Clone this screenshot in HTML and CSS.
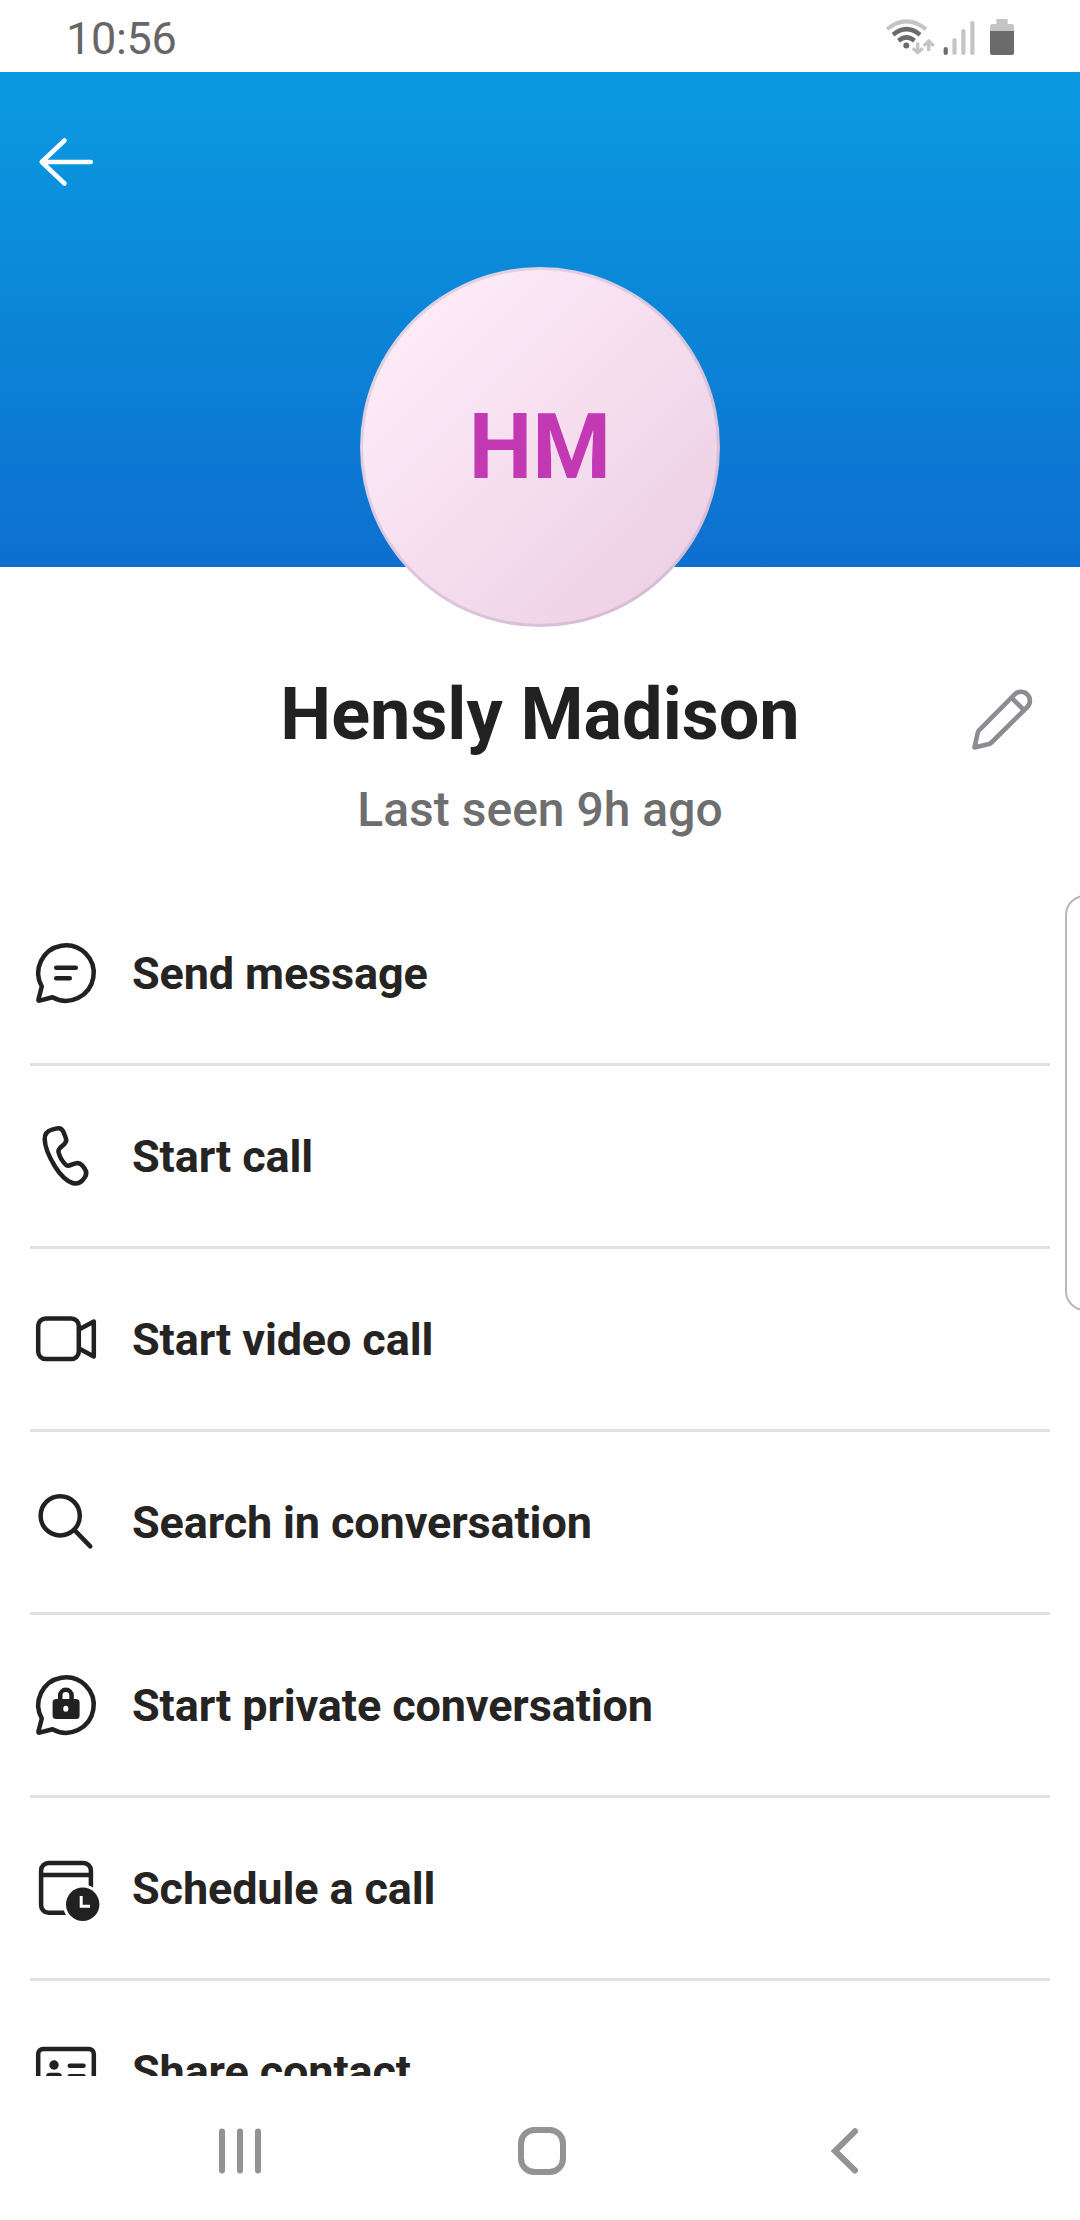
FILE: index.html
```html
<!DOCTYPE html>
<html lang="en">
<head>
<meta charset="utf-8">
<title>Hensly Madison</title>
<link rel="stylesheet" href="styles.css">
</head>
<body>
<div class="screen">
  <div class="status-bar">
    <span class="clock">10:56</span>
    <svg class="status-icons" viewBox="880 12 140 48">
      <g fill="none" stroke="#c4c4c4" stroke-width="4">
        <path d="M887 29.300Q906.500 13.500 926 29.300"/>
        <path d="M893 34.800Q906.500 23.500 920 34.800" stroke="#6b6b6b" stroke-width="4.400"/>
        <path d="M898.500 40.800Q906.500 34 914.500 40.800" stroke="#6b6b6b" stroke-width="4.400"/>
        <path d="M917.700 42.500V52M912.700 48.200L917.700 52.600L922.700 48.200" stroke-width="3.200"/>
        <path d="M928.700 51V41.500M923.700 45.800L928.700 41L933.700 45.800" stroke-width="3.200"/>
      </g>
      <circle cx="906.300" cy="45.500" r="3" fill="#6b6b6b"/>
      <g stroke-width="4.200" stroke-linecap="round" stroke="#c4c4c4">
        <path d="M945.700 49.200V53" stroke="#6b6b6b"/>
        <path d="M954.500 40.200V53M963.400 31.200V53M972.400 23.200V53"/>
      </g>
      <path d="M990 31V26.500Q990 24 992.500 24H996.300V19H1007.700V24H1011.500Q1014 24 1014 26.500V31Z" fill="#c4c4c4"/>
      <path d="M990 31H1014V53Q1014 55 1012 55H992Q990 55 990 53Z" fill="#6b6b6b"/>
    </svg>
  </div>

  <div class="hero">
    <svg class="back" viewBox="0 0 72 72" fill="none" stroke="#fff" stroke-width="4.500" stroke-linecap="round" stroke-linejoin="round">
      <path d="M34.500 14.500L11.700 36L34.500 57.500M11.700 36H60.800"/>
    </svg>
    <div class="avatar">HM</div>
  </div>

  <div class="profile">
    <h1 class="name">Hensly Madison</h1>
    <p class="seen">Last seen 9h ago</p>
    <svg class="edit" viewBox="966 684 72 72" fill="none" stroke="#8b8d93" stroke-width="4.600" stroke-linejoin="round">
      <path d="M1014.700 694.400A8.900 8.900 0 0 1 1027.300 707L991.500 742.500Q990.500 743.500 989 744L974.500 747.500L977.700 733Q978 731.500 979 730.300ZM1011.500 697.700L1024 710.200"/>
    </svg>
  </div>

  <ul class="actions">
    <li class="action">
      <svg class="icon" viewBox="0 0 72 72">
        <path d="M11.800 49.500A27.700 27.700 0 1 1 22.500 60.200L9.500 63.600Q8 63.800 8.400 62.500Z"/>
        <path d="M26.200 30.700H45.800M26.200 41.300H39.800"/>
      </svg>
      <span>Send message</span>
    </li>
    <li class="action">
      <svg class="icon" viewBox="0 0 72 72">
        <path d="M22 9.600L27 8.400Q31.500 7.500 33.300 11.700L35.800 18Q37 21.300 34.500 23.800L30 28Q28 30 28.600 32.500Q30.500 39.500 35.500 44.500Q37 46.200 39.200 45.500L45.500 43.400Q49.500 42.400 52 45.200L55 49.200Q57.500 53 55 57L52.500 60.300Q48.500 65 42.500 63Q33.500 60 25 46.500Q15 30 14.700 19.500Q14.500 11.500 22 9.600Z"/>
      </svg>
      <span>Start call</span>
    </li>
    <li class="action">
      <svg class="icon" viewBox="0 0 72 72">
        <rect x="8.200" y="15.500" width="40.600" height="40.600" rx="7.500"/>
        <path d="M49 26.500L63.800 18.600V53.400L49 45.500"/>
      </svg>
      <span>Start video call</span>
    </li>
    <li class="action">
      <svg class="icon" viewBox="0 0 72 72">
        <circle cx="30.200" cy="29.800" r="19.600"/>
        <path d="M44.500 44.200L60.300 60.300"/>
      </svg>
      <span>Search in conversation</span>
    </li>
    <li class="action">
      <svg class="icon" viewBox="0 0 72 72">
        <path d="M11.800 49.500A27.700 27.700 0 1 1 22.500 60.200L9.500 63.600Q8 63.800 8.400 62.500Z"/>
        <path d="M30.200 31V26.500A5.700 5.700 0 0 1 41.600 26.500V31"/>
        <rect class="solid" x="22.600" y="30" width="27" height="20" rx="3.500"/>
        <rect class="knockout" x="33.300" y="36.700" width="5" height="6" rx="2.500"/>
      </svg>
      <span>Start private conversation</span>
    </li>
    <li class="action">
      <svg class="icon" viewBox="0 0 72 72">
        <rect x="11.100" y="10.900" width="49.800" height="49.900" rx="7.500"/>
        <path d="M11.100 23H60.900"/>
        <circle class="knockout" cx="52.700" cy="52.300" r="19.800"/>
        <circle class="solid" cx="52.700" cy="52.300" r="16.700"/>
        <path class="hands" d="M51.200 44V54.300H60"/>
      </svg>
      <span>Schedule a call</span>
    </li>
    <li class="action">
      <svg class="icon" viewBox="0 0 72 72">
        <rect x="8.200" y="14" width="55.600" height="44" rx="5"/>
        <circle class="solid" cx="24" cy="30" r="4.700"/>
        <path class="solid" d="M16 42Q16 37.700 20 37.700H28Q32 37.700 32 42Q32 47 24 47Q16 47 16 42Z"/>
        <path d="M39.800 30.700H53.500M39.800 41.300H53.500"/>
      </svg>
      <span>Share contact</span>
    </li>
  </ul>

  <div class="nav-bar">
    <svg viewBox="0 0 60 60"><path d="M12 10.500V49.500M30 10.500V49.500M48 10.500V49.500"/></svg>
    <svg viewBox="0 0 60 60"><rect x="9" y="9" width="42" height="42" rx="13.500"/></svg>
    <svg viewBox="0 0 60 60"><path d="M41 10.300L21 30L41 49.500"/></svg>
  </div>
  <div class="edge-panel"></div>
</div>
</body>
</html>
```
FILE: styles.css
```css
* {
  box-sizing: border-box;
}

body {
  margin: 0;
  background: #fefefe;
  font-family: Roboto, "Liberation Sans", sans-serif;
  color: #212121;
}

.screen {
  position: relative;
  display: flex;
  flex-direction: column;
  width: 1080px;
  height: 2220px;
  overflow: hidden;
}

.status-bar {
  display: flex;
  flex: none;
  justify-content: space-between;
  align-items: center;
  height: 72px;
  padding: 0 60px 0 66px;
}

.clock {
  padding-top: 5px;
  font-size: 45px;
  line-height: 60px;
  letter-spacing: -0.3px;
  color: #666;
}

.status-icons {
  width: 140px;
  height: 48px;
}

.hero {
  display: flex;
  flex: none;
  flex-direction: column;
  height: 495px;
  padding: 54px 30px 0;
  background: linear-gradient(#0a9be1, #0d6fcf);
}

.back {
  flex: none;
  width: 72px;
  height: 72px;
}

.avatar {
  display: flex;
  flex: none;
  align-self: center;
  align-items: center;
  justify-content: center;
  width: 360px;
  height: 360px;
  margin-top: 69px;
  border: 3px solid rgba(120, 110, 150, 0.2);
  border-radius: 50%;
  background: linear-gradient(135deg, #fdeef6 8%, #f9e5f5 32%, #f5ddee 52%, #edcfe5 92%) border-box;
  color: #c239b3;
  font-size: 90px;
  font-weight: 700;
}

.profile {
  position: relative;
  flex: none;
  height: 316px;
  padding-top: 106px;
  text-align: center;
}

.name {
  margin: 0;
  font-size: 72px;
  font-weight: 700;
  line-height: 84px;
}

.seen {
  margin: 25px 0 0;
  font-size: 48px;
  font-weight: 500;
  line-height: 56px;
  color: #6e6e6e;
}

.edit {
  position: absolute;
  top: 117px;
  right: 42px;
  width: 72px;
  height: 72px;
}

.actions {
  flex: none;
  height: 1193px;
  margin: 0;
  padding: 0 30px;
  overflow: hidden;
  list-style: none;
}

.action {
  display: flex;
  align-items: center;
  gap: 30px;
  height: 183px;
  border-bottom: 3px solid #e1e1e1;
  font-size: 45px;
  font-weight: 700;
  line-height: 54px;
  letter-spacing: -0.13px;
  color: #252423;
}

.action span {
  padding-top: 2px;
}

.icon {
  flex: none;
  width: 72px;
  height: 72px;
  fill: none;
  stroke: #212121;
  stroke-width: 4.5;
  stroke-linecap: round;
  stroke-linejoin: round;
}

.icon .solid {
  fill: #212121;
  stroke: none;
}

.icon .knockout {
  fill: #fefefe;
  stroke: none;
}

.icon .hands {
  stroke: #fefefe;
  stroke-width: 3;
  stroke-linecap: butt;
  stroke-linejoin: miter;
}

.nav-bar {
  display: grid;
  flex: none;
  grid-template-columns: repeat(3, 302px);
  place-items: center;
  height: 144px;
  padding: 6px 0 0 89px;
}

.nav-bar svg {
  width: 60px;
  height: 60px;
  fill: none;
  stroke: #939393;
  stroke-width: 6;
  stroke-linecap: round;
}

.edge-panel {
  position: absolute;
  top: 895px;
  right: -30px;
  width: 45px;
  height: 416px;
  border: 2px solid #b8b8b8;
  border-radius: 20px;
  background: #fefefe;
}
```
